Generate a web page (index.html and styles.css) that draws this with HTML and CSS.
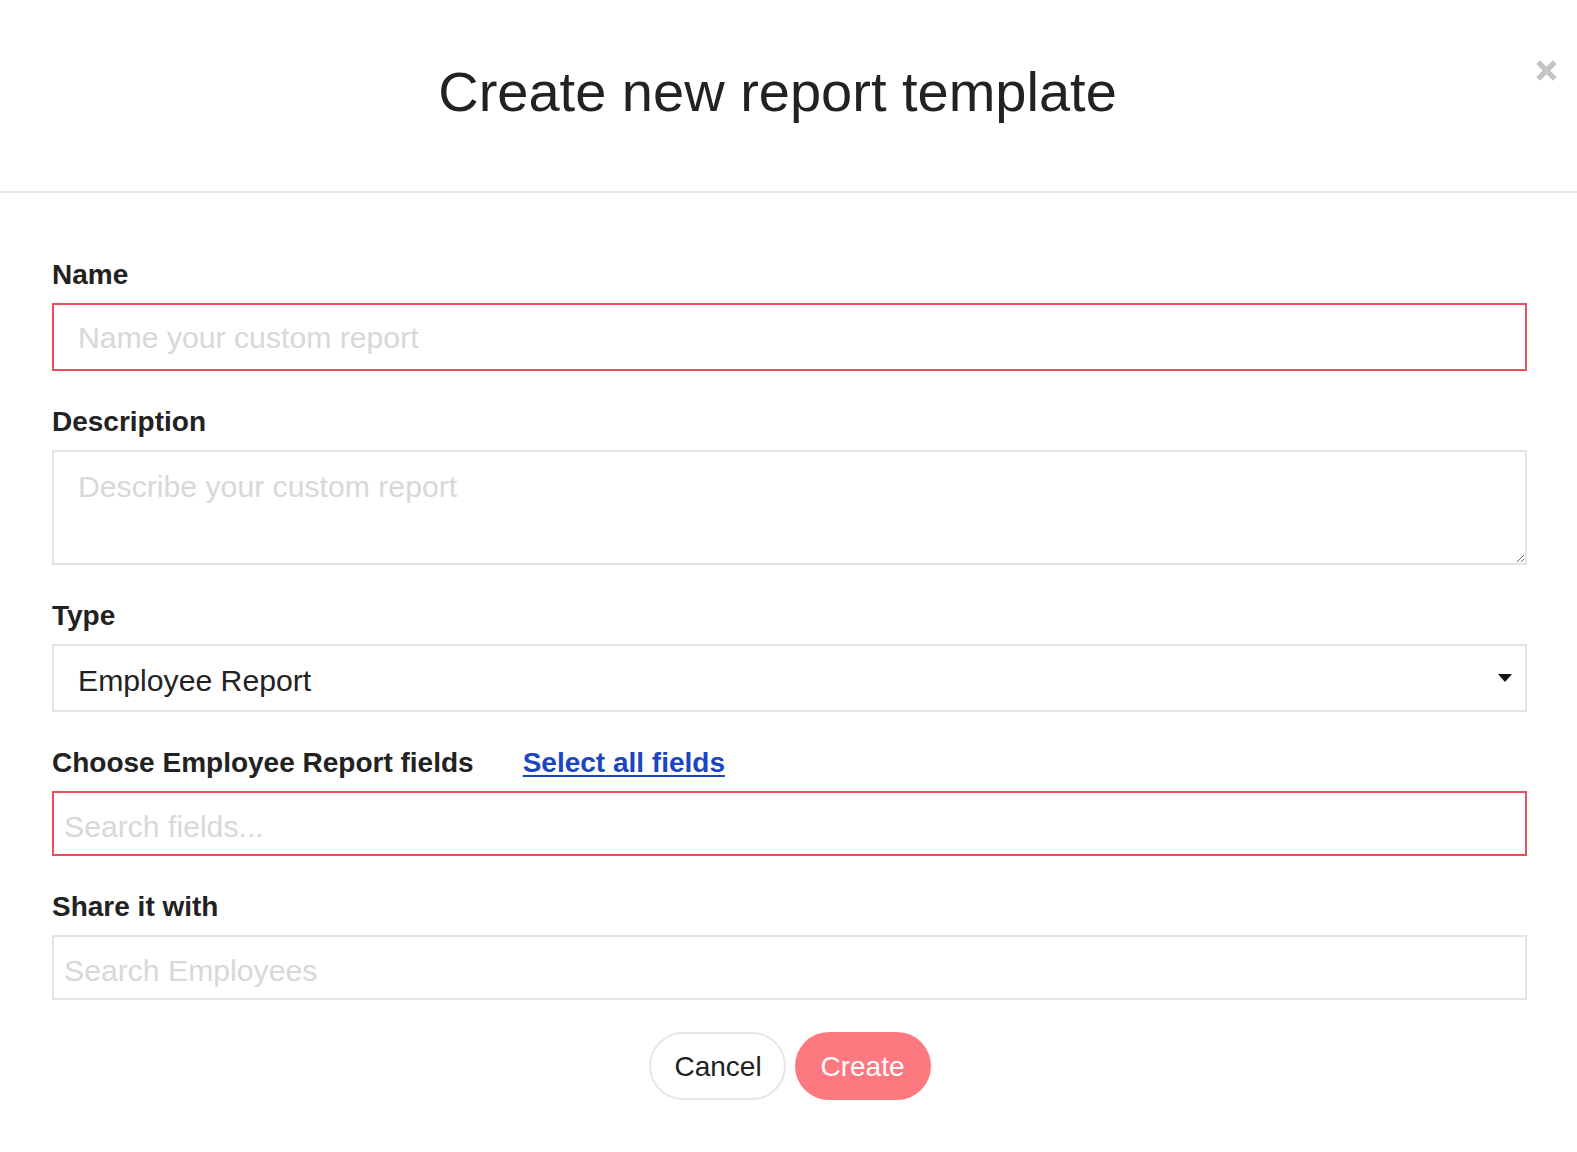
FILE: index.html
```html
<!DOCTYPE html>
<html lang="en">
<head>
<meta charset="utf-8">
<title>Create new report template</title>
<link rel="stylesheet" href="styles.css">
</head>
<body>
<div class="modal">
  <header class="modal-header">
    <h1 class="modal-title">Create new report template</h1>
    <button class="close-btn" type="button" aria-label="Close">
      <svg width="22" height="22" viewBox="0 0 22 22"><path d="M3 3 L19 19 M19 3 L3 19" stroke="#c4c4c4" stroke-width="5" stroke-linecap="butt"/></svg>
    </button>
  </header>
  <form class="modal-body">
    <div class="field">
      <label class="field-label">Name</label>
      <input class="control control-lg is-error" type="text" placeholder="Name your custom report">
    </div>
    <div class="field">
      <label class="field-label">Description</label>
      <textarea class="control control-area" placeholder="Describe your custom report"></textarea>
    </div>
    <div class="field">
      <label class="field-label">Type</label>
      <div class="control control-lg select">
        <span class="select-value">Employee Report</span>
        <svg class="select-arrow" width="14" height="8" viewBox="0 0 14 8"><path d="M0 0 H14 L7 8 Z" fill="#111"/></svg>
      </div>
    </div>
    <div class="field">
      <div class="label-row">
        <label class="field-label">Choose Employee Report fields</label>
        <a class="link" href="#">Select all fields</a>
      </div>
      <input class="control control-sm is-error" type="text" placeholder="Search fields...">
    </div>
    <div class="field">
      <label class="field-label">Share it with</label>
      <input class="control control-sm" type="text" placeholder="Search Employees">
    </div>
    <div class="actions">
      <button class="btn btn-cancel" type="button">Cancel</button>
      <button class="btn btn-create" type="button">Create</button>
    </div>
  </form>
</div>
</body>
</html>
```
FILE: styles.css
```css
* { box-sizing: border-box; }
html, body {
  margin: 0;
  padding: 0;
  background: #fff;
  font-family: "Liberation Sans", Arial, Helvetica, sans-serif;
  color: #222;
}
.modal { width: 100%; }
.modal-header {
  position: relative;
  height: 193px;
  padding: 60px 22px 0 0;
  border-bottom: 2px solid #e6e6e6;
  text-align: center;
}
.modal-title {
  margin: 0;
  font-size: 56px;
  line-height: 64px;
  font-weight: 400;
  color: #222;
}
.close-btn {
  position: absolute;
  top: 59px;
  right: 19px;
  width: 23px;
  height: 23px;
  padding: 0;
  border: 0;
  background: none;
  cursor: pointer;
}
.close-btn svg { display: block; width: 23px; height: 23px; }
.modal-body {
  padding: 66px 50px 40px 52px;
  display: flex;
  flex-direction: column;
}
.field {
  display: flex;
  flex-direction: column;
  margin-bottom: 35px;
}
.field-label {
  display: block;
  font-size: 28px;
  line-height: 32px;
  font-weight: 700;
  color: #222;
  margin-bottom: 12px;
}
.label-row {
  display: flex;
  align-items: baseline;
  gap: 49px;
}
.link {
  font-size: 28px;
  line-height: 32px;
  font-weight: 700;
  color: #1b46c2;
  text-decoration: underline;
  text-decoration-thickness: 2px;
  text-underline-offset: 3px;
}
.control {
  width: 100%;
  font-family: inherit;
  font-size: 30.2px;
  color: #222;
  background: #fff;
  border: 2px solid #e3e3e3;
  border-radius: 0;
  outline: none;
  margin: 0;
}
.control::placeholder { color: #d8d8d8; opacity: 1; }
.control-lg { height: 68px; padding: 2px 24px 0; }
.control-sm { height: 65px; padding: 6px 10px 0; }
.control-area {
  height: 115px;
  padding: 17px 24px;
  line-height: 36px;
  resize: vertical;
  display: block;
}
.is-error { border-color: #ea4d5b; }
.select {
  display: flex;
  align-items: center;
  justify-content: space-between;
  padding: 0 13px 0 24px;
}
.select-value { line-height: 36px; padding-top: 6px; }
.select-arrow { display: block; }
.actions {
  display: flex;
  justify-content: center;
  gap: 9px;
  margin-top: -3px;
}
.btn {
  height: 68px;
  border-radius: 34px;
  font-family: inherit;
  font-size: 28px;
  padding: 2px 24px 0;
  cursor: pointer;
}
.btn-cancel {
  width: 137px;
  background: #fff;
  border: 2px solid #e6e6e6;
  color: #222;
}
.btn-create {
  width: 136px;
  background: #fe7880;
  border: 0;
  color: #fff;
}
```
